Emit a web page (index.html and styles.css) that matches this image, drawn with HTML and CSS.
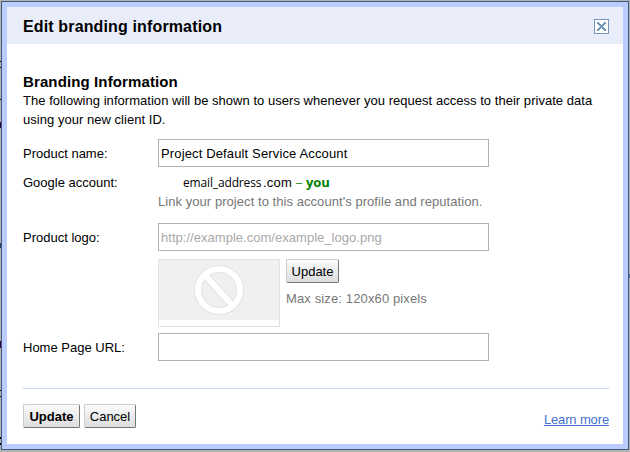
FILE: index.html
```
<!DOCTYPE html>
<html lang="en">
<head>
<meta charset="utf-8">
<title>Edit branding information</title>
<link rel="stylesheet" href="styles.css">
</head>
<body>
<main class="dialog">
  <header class="titlebar">
    <h1 class="title">Edit branding information</h1>
    <svg class="close" width="15" height="15" viewBox="0 0 15 15" shape-rendering="crispEdges">
      <rect x=".5" y=".5" width="14" height="14" fill="#fff" stroke="#7596bd"/>
      <path d="M3 3h2v1h1v1h1v1h1V5h1V4h1V3h2v2h-1v1h-1v1H9v1h1v1h1v1h1v2h-2v-1H9v-1H8V9H7v1H6v1H5v1H3v-2h1V9h1V8h1V7H5V6H4V5H3z" fill="#7596bd"/>
    </svg>
  </header>
  <section class="content">
    <h2 class="heading">Branding Information</h2>
    <p class="intro">The following information will be shown to users whenever you request access to their private data<br>using your new client ID.</p>
    <div class="form">
      <span class="label">Product name:</span>
      <div class="field name">Project Default Service Account</div>
      <span class="label account-label">Google account:</span>
      <div class="account">
        <div class="email"><span class="address">email_address</span><span class="domain">.com</span><span class="dash">–</span><b class="you">you</b></div>
        <div class="hint link-hint">Link your project to this account's profile and reputation.</div>
      </div>
      <span class="label">Product logo:</span>
      <div class="field placeholder">http://example.com/example_logo.png</div>
      <div class="logo">
        <div class="thumb">
          <svg class="thumb-image" width="120" height="60" viewBox="0 0 120 60">
            <rect width="120" height="60" fill="#f0f0f0"/>
            <g fill="none">
              <circle cx="60" cy="30" r="21" stroke="#e3e3e3" stroke-width="8"/>
              <path d="M46 15L74 46" stroke="#e3e3e3" stroke-width="8"/>
              <circle cx="60" cy="30" r="21" stroke="#fff" stroke-width="6"/>
              <path d="M46 15L74 46" stroke="#fff" stroke-width="6"/>
            </g>
          </svg>
        </div>
        <div class="logo-side">
          <button class="button upload">Update</button>
          <div class="hint size-hint">Max size: 120x60 pixels</div>
        </div>
      </div>
      <span class="label">Home Page URL:</span>
      <div class="field"></div>
    </div>
    <footer class="footer">
      <button class="button primary">Update</button>
      <button class="button cancel">Cancel</button>
      <a class="more" href="#">Learn more</a>
    </footer>
  </section>
</main>
</body>
</html>
```
FILE: styles.css
```
* { box-sizing: border-box; }
body {
  margin: 0;
  height: 452px;
  padding: 1px;
  overflow: hidden;
  /* slivers of the page behind the dialog, along its left and right edges */
  background:
    linear-gradient(#000, #000) 0 61px / 1px 1px no-repeat,
    linear-gradient(#000, #000) 0 67px / 1px 1px no-repeat,
    linear-gradient(#000, #000) 0 99px / 1px 1px no-repeat,
    linear-gradient(#300040, #300040) 0 122px / 1px 6px no-repeat,
    linear-gradient(#204060, #204060) 0 243px / 1px 5px no-repeat,
    linear-gradient(#300040, #300040) 0 341px / 1px 7px no-repeat,
    linear-gradient(#000, #000) 0 390px / 1px 1px no-repeat,
    linear-gradient(#000, #000) 0 396px / 1px 1px no-repeat,
    linear-gradient(#000, #000) 0 437px / 1px 2px no-repeat,
    linear-gradient(#000, #000) 0 443px / 1px 2px no-repeat,
    linear-gradient(#4a7090, #4a7090) 629px 274px / 1px 4px no-repeat,
    #b3b3b3;
  font: 13px/19px "Liberation Sans", Arial, sans-serif;
  color: #000;
}
.dialog {
  width: 628px;
  height: 449px;
  border: 1px solid #405a80;
  background: #fff;
  box-shadow: inset 0 0 0 5px #bbccff;
  padding: 5px;
}
.titlebar {
  height: 37px;
  display: flex;
  align-items: center;
  justify-content: space-between;
  padding: 2px 14px 0 16px;
  background: #e9edf9;
}
.title, .heading { margin: 0; font-weight: bold; white-space: nowrap; }
.title { font-size: 16px; letter-spacing: .14px; }
.close { display: block; }
.content { padding: 28px 14px 0 16px; }
.heading { font-size: 15px; line-height: 19px; letter-spacing: .12px; }
.intro { margin: 0 0 10px; white-space: nowrap; letter-spacing: .035px; }
.form {
  display: grid;
  grid-template-columns: 135px 331px;
  grid-template-rows: 28px 56px 28px 82px 28px;
}
.label { padding-top: 5px; white-space: nowrap; }
.account-label { padding-top: 6px; }
.field {
  height: 28px;
  border: 1px solid #b0b0b0;
  padding: 4px 2px;
  line-height: 19px;
  white-space: nowrap;
}
.name { letter-spacing: .14px; }
.placeholder { color: #a9a9a9; letter-spacing: .03px; }
.account { padding-top: 6px; white-space: nowrap; }
.email { display: flex; height: 19px; padding-left: 25px; }
.address { width: 80px; font-family: "Open Sans", sans-serif; font-size: 12px; letter-spacing: -.15px; }
.domain { width: 33px; letter-spacing: .2px; }
.dash { width: 10px; font-size: 11px; color: #008000; }
.you { color: #008000; font-family: "Open Sans", sans-serif; font-size: 13px; letter-spacing: -.1px; }
.hint { color: #777; white-space: nowrap; }
.link-hint { letter-spacing: .055px; }
.logo { grid-column: 2; display: flex; gap: 6px; padding-top: 8px; }
.thumb { width: 122px; height: 68px; border: 1px solid #e3e3e3; }
.thumb-image { display: block; }
.button {
  display: block;
  height: 24px;
  padding: 1px 0 0;
  border: 1px solid;
  border-color: #ccc #777 #777 #ccc;
  border-radius: 2px;
  background: linear-gradient(#fbfbfb, #ddd);
  font: 13px/21px "Liberation Sans", Arial, sans-serif;
  color: #000;
}
.upload { width: 53px; }
.size-hint { margin-top: 6px; letter-spacing: .13px; }
.footer {
  display: flex;
  gap: 4px;
  margin-top: 27px;
  padding-top: 15px;
  border-top: 1px solid #c6d4f0;
}
.primary { width: 57px; font-weight: bold; }
.cancel { width: 52px; }
.more { margin: 6px 0 0 auto; color: #4372cf; letter-spacing: -.14px; }
```
